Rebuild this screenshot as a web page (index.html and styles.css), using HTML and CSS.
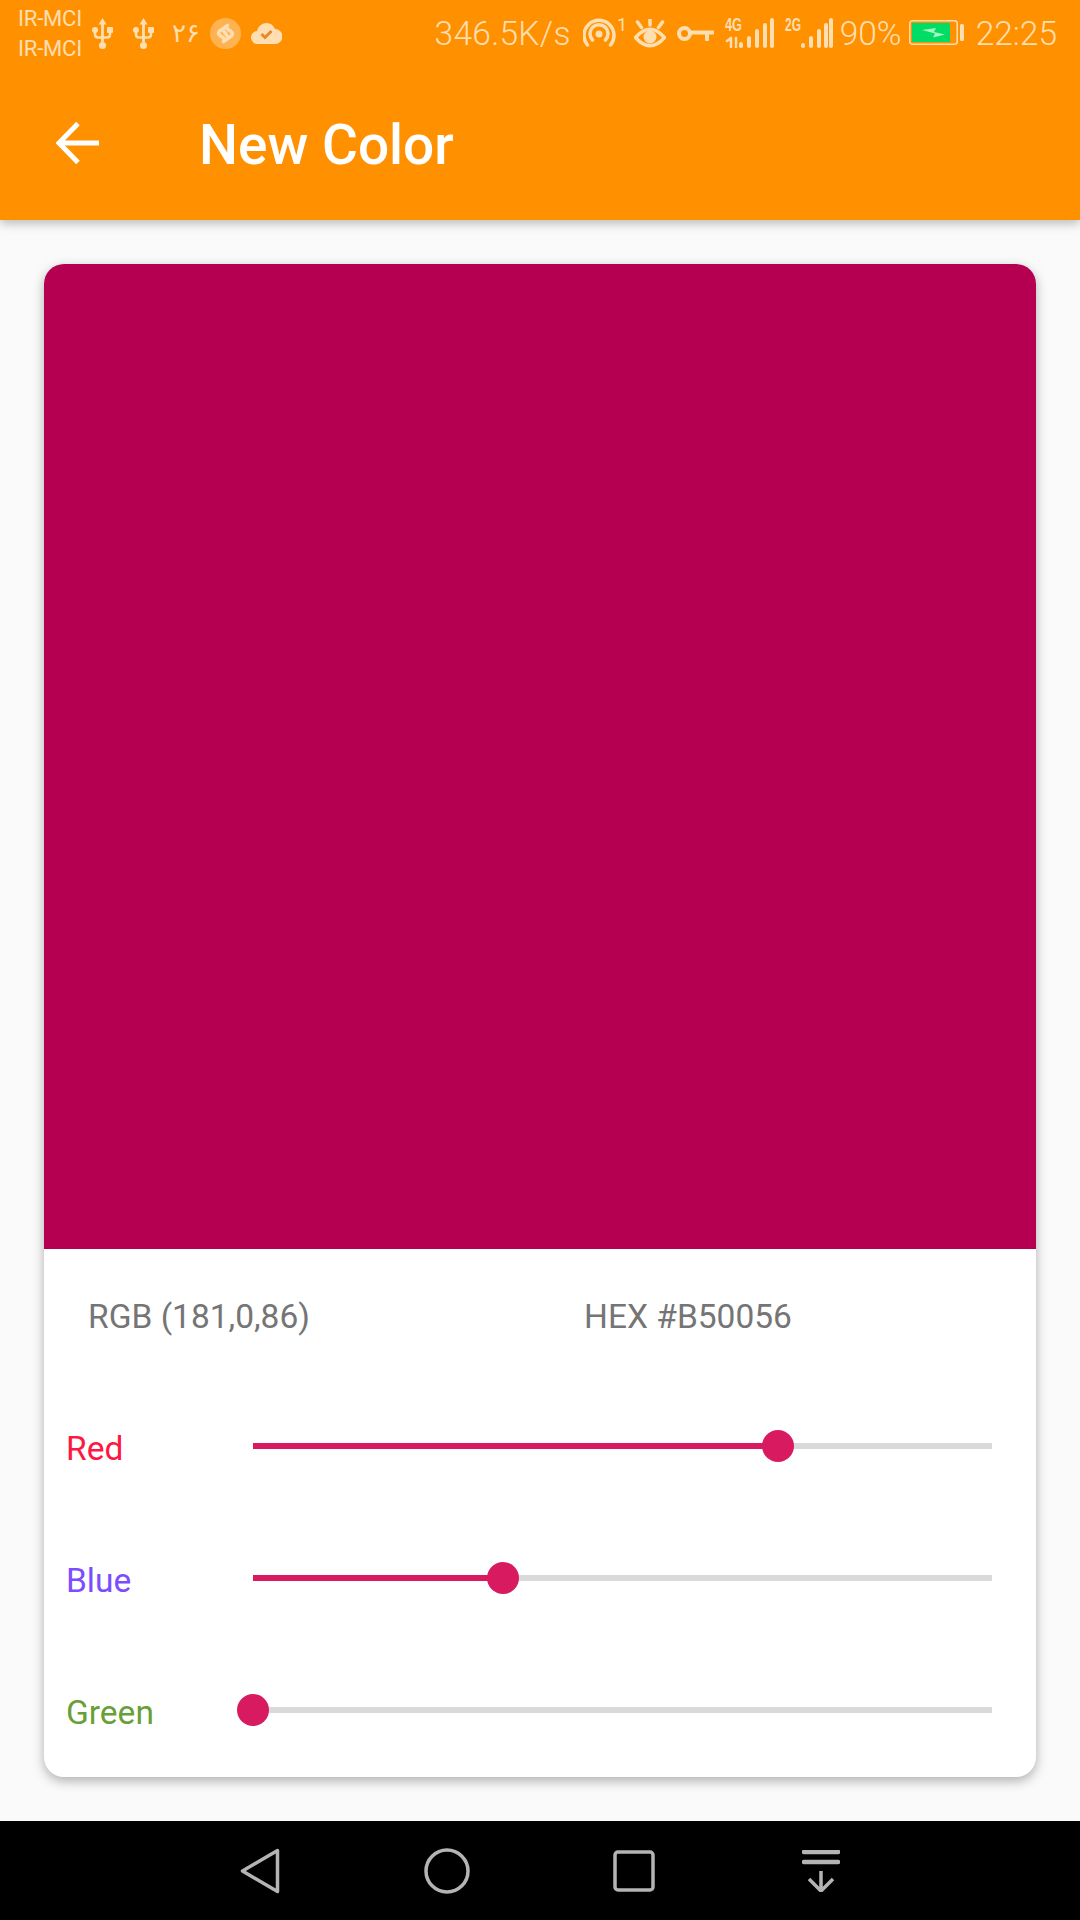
FILE: index.html
```html
<!DOCTYPE html>
<html lang="en">
<head>
<meta charset="utf-8">
<title>New Color</title>
<link rel="stylesheet" href="styles.css">
</head>
<body>
<div class="screen">
  <header class="appbar">
    <div class="status">
      <div class="status-left">
        <div class="carriers"><span>IR-MCI</span><span>IR-MCI</span></div>
        <svg class="ic usb" viewBox="0 0 21 31"><path class="fill" d="M10.500 0l4 6.500h-2.600V24h-2.800V6.500H6.500z"/><circle class="fill" cx="10.500" cy="27.500" r="3.500"/><circle class="fill" cx="3" cy="12" r="3"/><rect class="fill" x="15" y="9" width="6" height="6" rx="1"/><path class="line thin" d="M3 13v3.500q0 3 3 3h4.500M18 13v3.500q0 3-3 3h-4.500"/></svg>
        <svg class="ic usb m-usb" viewBox="0 0 21 31"><path class="fill" d="M10.500 0l4 6.500h-2.600V24h-2.800V6.500H6.500z"/><circle class="fill" cx="10.500" cy="27.500" r="3.500"/><circle class="fill" cx="3" cy="12" r="3"/><rect class="fill" x="15" y="9" width="6" height="6" rx="1"/><path class="line thin" d="M3 13v3.500q0 3 3 3h4.500M18 13v3.500q0 3-3 3h-4.500"/></svg>
        <span class="fa-num">۲۶</span>
        <svg class="ic shazam" viewBox="0 0 31 31"><circle class="fill soft" cx="15.500" cy="15.500" r="15.500"/><path class="line s-mark" d="M17.500 7.500L9.500 13Q7.500 15.500 10 17.500L13.500 20M13.500 23.500L21.500 18Q23.500 15.500 21 13.500L17.500 11M13 12l5 7"/></svg>
        <svg class="ic cloud" viewBox="0 0 31 21"><path class="fill" d="M7 21a6.500 6.500 0 0 1-1-13A9.500 9.500 0 0 1 15 0a9.500 9.500 0 0 1 9 6 7.500 7.500 0 0 1 0 15z"/><path class="check" d="M10.500 11l3.500 3.500 6.500-6.500"/></svg>
      </div>
      <div class="status-right">
        <span class="st-text speed">346.5K/s</span>
        <svg class="ic hotspot" viewBox="0 -6 48 35"><circle class="fill" cx="16" cy="16" r="3.500"/><path class="line" d="M9.500 22a9 9 0 1 1 13 0M4.500 27a15 15 0 1 1 23 0"/><text class="sup" x="34" y="13">1</text></svg>
        <svg class="ic eye" viewBox="0 0 32 29"><path class="line" d="M1.500 18.500Q16 2 30.500 18.500Q16 35 1.500 18.500z"/><circle class="fill" cx="16" cy="18" r="6.500"/><path class="line" d="M16 0v6M3.500 3l4 5.500M28.500 3l-4 5.500"/></svg>
        <svg class="ic key" viewBox="0 0 37 15"><circle class="line key-ring" cx="7.500" cy="7.500" r="5.500"/><path class="line key-ring" d="M13 6.500h23M30 6.500v7"/></svg>
        <svg class="ic sig4" viewBox="0 -6 49 36"><text class="net" x="0" y="13" textLength="17" lengthAdjust="spacingAndGlyphs">4G</text><path class="line thin" d="M6 20v9M2 23l4-3M11 20v6M11 29v-1"/><path class="bars" d="M16 28v-2M24 28v-8M32 28v-15M40 28v-21M47 28V2"/></svg>
        <svg class="ic sig2" viewBox="0 -6 48 36"><text class="net" x="0" y="13" textLength="16" lengthAdjust="spacingAndGlyphs">2G</text><path class="bars" d="M18 28v-1M26 28v-8M34 28v-15M41 28v-21M46 28V2"/></svg>
        <span class="st-text pct">90%</span>
        <svg class="ic battery" viewBox="0 0 55 25"><rect class="bat-frame" x="0.750" y="0.750" width="47.500" height="23.500" rx="3"/><rect class="bat-level" x="3" y="3" width="38" height="19"/><path class="bat-bolt" d="M13 10l14-2-2 4 11 2.500-12 3 2-4z"/><rect class="fill" x="51" y="4" width="4" height="17" rx="1.500"/></svg>
        <span class="st-text time">22:25</span>
      </div>
    </div>
    <div class="toolbar">
      <svg class="back" viewBox="0 0 44 44"><path d="M43 22H3M22 2.500L3 22l19 19.500"/></svg>
      <h1 class="title">New Color</h1>
    </div>
  </header>
  <main class="content">
    <section class="card">
      <div class="swatch"></div>
      <div class="info"><span>RGB (181,0,86)</span><span>HEX #B50056</span></div>
      <div class="row">
        <span class="label red">Red</span>
        <div class="track"><div class="fillbar" style="width:71%"><span class="thumb"></span></div></div>
      </div>
      <div class="row">
        <span class="label blue">Blue</span>
        <div class="track"><div class="fillbar" style="width:33.800%"><span class="thumb"></span></div></div>
      </div>
      <div class="row">
        <span class="label green">Green</span>
        <div class="track"><div class="fillbar" style="width:0%"><span class="thumb"></span></div></div>
      </div>
    </section>
  </main>
  <nav class="navbar">
    <div class="navbtn"><svg class="nav-ic nav-back" viewBox="0 0 40 46"><path d="M37.500 2.500L2.500 23 37.500 43.500z"/></svg></div>
    <div class="navbtn"><svg class="nav-ic nav-home" viewBox="0 0 46 46"><circle cx="23" cy="23" r="21"/></svg></div>
    <div class="navbtn"><svg class="nav-ic nav-recent" viewBox="0 0 42 42"><rect x="2" y="2" width="38" height="38" rx="3"/></svg></div>
    <div class="navbtn"><svg class="nav-ic nav-down" viewBox="0 0 38 42"><path class="navthick" d="M2 2h34M2 12h34"/><path d="M19 21v20M7 29l12 12 12-12"/></svg></div>
  </nav>
</div>
</body>
</html>
```

FILE: styles.css
```css
* { box-sizing: border-box; }
html, body { margin: 0; padding: 0; }
body { font-family: Roboto, "Noto Sans", sans-serif; background: #fafafa; }
.screen { width: 1080px; height: 1920px; display: flex; flex-direction: column; overflow: hidden; }

.appbar { height: 220px; background: #ff9100; color: #fff; box-shadow: 0 3px 10px rgba(0,0,0,.28); position: relative; z-index: 1; flex: none; }
.status { height: 66px; display: flex; justify-content: space-between; color: #ffdeb2; }
.status-left { display: flex; align-items: flex-start; padding-left: 18px; }
.status-right { display: flex; align-items: flex-start; padding-right: 23px; }
.carriers { display: flex; flex-direction: column; font-size: 22px; line-height: 30px; font-weight: 400; width: 74px; padding-top: 4px; letter-spacing: -.2px; }
.ic { display: block; flex: none; }
.fill { fill: #ffdeb2; }
.soft { opacity: .45; }
.line { fill: none; stroke: #ffdeb2; stroke-width: 3.500; stroke-linecap: round; }
.thin { stroke-width: 2.500; }
.s-mark { stroke-width: 3.500; }
.key-ring { stroke-width: 4; }
.check { fill: none; stroke: #e8882a; stroke-width: 3; }
.usb { width: 21px; height: 31px; margin-top: 18px; }
.m-usb { margin-left: 20px; }
.fa-num { font-family: "DejaVu Sans", sans-serif; font-size: 26px; line-height: 30px; width: 26px; margin: 18px 0 0 18px; white-space: nowrap; }
.shazam { width: 31px; height: 31px; margin: 18px 0 0 12px; }
.cloud { width: 31px; height: 21px; margin: 23px 0 0 10px; }

.st-text { font-weight: 300; font-size: 33.500px; line-height: 36px; margin-top: 16px; white-space: nowrap; flex: none; }
.speed { letter-spacing: .3px; }
.hotspot { width: 48px; height: 35px; margin: 12px 0 0 12px; }
.sup { font: 400 18px Roboto, sans-serif; fill: #ffdeb2; }
.eye { width: 32px; height: 29px; margin: 19px 0 0 3px; }
.key { width: 37px; height: 15px; margin: 26px 0 0 11px; }
.sig4 { width: 49px; height: 36px; margin: 12px 0 0 11px; }
.sig2 { width: 48px; height: 36px; margin: 12px 0 0 11px; }
.net { font: 700 18px "Liberation Sans", sans-serif; fill: #ffdeb2; }
.bars { fill: none; stroke: #ffdeb2; stroke-width: 4; stroke-linecap: round; }
.pct { margin-left: 7px; }
.battery { width: 55px; height: 25px; margin: 20px 0 0 7px; }
.bat-frame { fill: none; stroke: #ffdeb2; stroke-width: 1.500; }
.bat-level { fill: #00dd66; }
.bat-bolt { fill: #a6f5c0; }
.time { margin-left: 12px; }

.toolbar { height: 154px; display: flex; align-items: center; padding-left: 56px; }
.back { width: 44px; height: 44px; flex: none; }
.back path { fill: none; stroke: #fff; stroke-width: 5; }
.title { margin: 4px 0 0 99px; font-size: 55px; font-weight: 500; line-height: 60px; }

.content { flex: 1; padding: 44px 44px 0; }
.card { height: 1513px; background: #fff; border-radius: 20px; overflow: hidden; box-shadow: 0 4px 12px rgba(0,0,0,.3); }
.swatch { height: 985px; background: #b50051; }
.info { height: 131px; display: grid; grid-template-columns: 496px 1fr; align-items: center; padding: 3px 0 0 44px; font-size: 33.500px; color: #757575; }
.row { height: 132px; display: flex; align-items: center; padding: 0 44px 0 22px; }
.label { width: 187px; flex: none; font-size: 33.500px; line-height: 36px; padding-top: 5px; }
.red { color: #ff1744; }
.blue { color: #7c4dff; }
.green { color: #689f38; }
.track { flex: 1; height: 6px; background: #d9d9d9; }
.fillbar { height: 6px; background: #d81b60; position: relative; }
.thumb { position: absolute; right: -16px; top: -13px; width: 32px; height: 32px; border-radius: 50%; background: #d81b60; }

.navbar { height: 99px; flex: none; background: #000; display: flex; justify-content: center; align-items: center; padding-top: 1px; }
.navbtn { width: 187px; display: flex; justify-content: center; }
.nav-ic { display: block; }
.nav-back { width: 40px; height: 46px; }
.nav-home { width: 46px; height: 46px; }
.nav-recent { width: 42px; height: 42px; }
.nav-down { width: 38px; height: 42px; }
.nav-ic path, .nav-ic circle, .nav-ic rect { fill: none; stroke: #b4b4b4; stroke-width: 3.500; stroke-linejoin: round; }
.nav-ic .navthick { stroke-width: 4.500; stroke-linecap: round; }
```
